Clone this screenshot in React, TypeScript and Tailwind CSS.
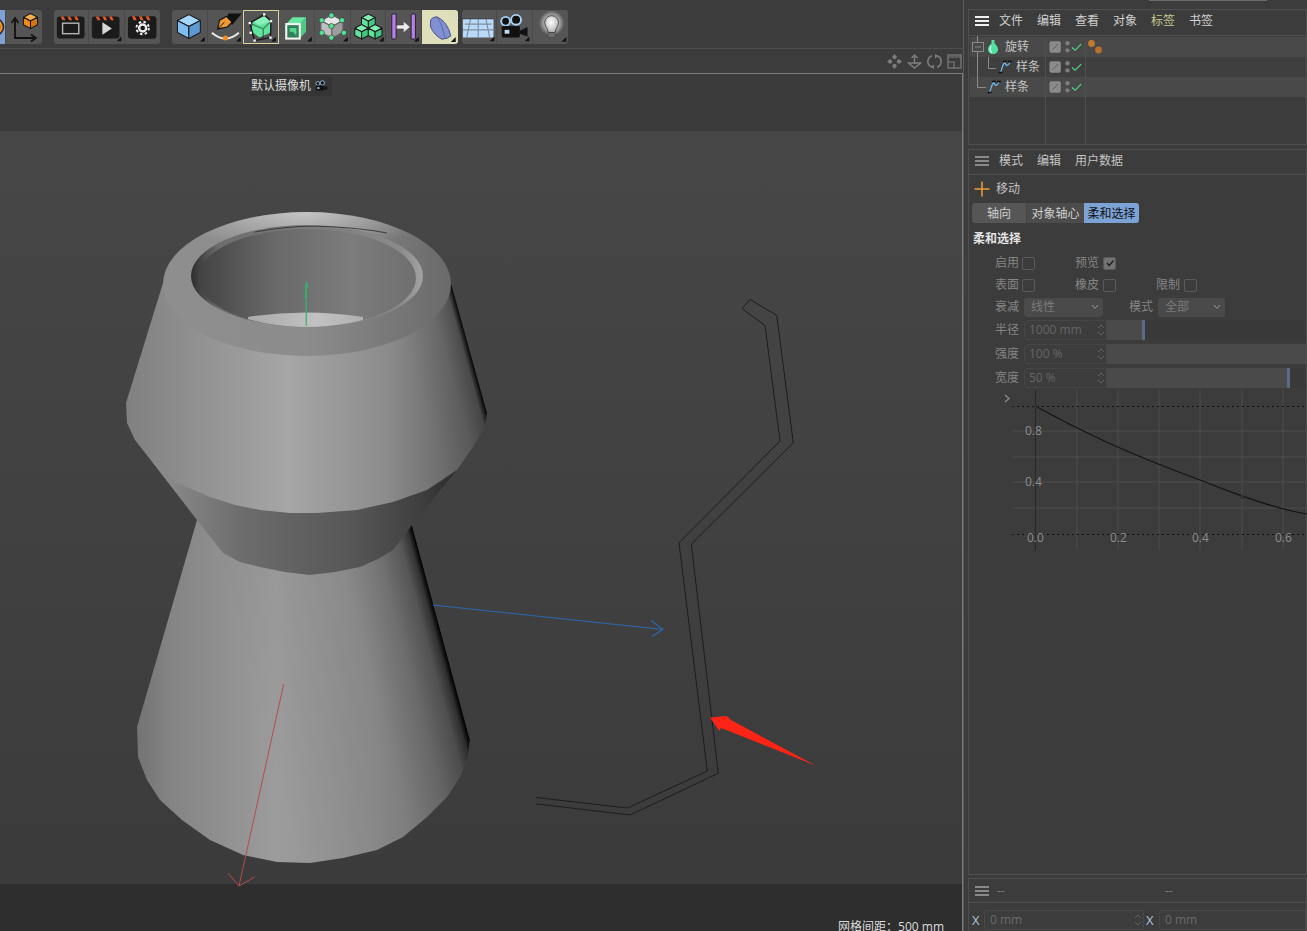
import React from "react";

const FONT = "font-['Open_Sans','Noto_Sans_CJK_SC',sans-serif]";

function Hex({ cx, cy, r, top, left, right, stroke = "#1c1c1c" }: { cx: number; cy: number; r: number; top: string; left: string; right: string; stroke?: string }) {
  const w = r * 0.95;
  const h = r * 0.5;
  return (
    <g stroke={stroke} strokeWidth={1.1} strokeLinejoin="round">
      <polygon points={`${cx},${cy - r} ${cx + w},${cy - h} ${cx},${cy} ${cx - w},${cy - h}`} fill={top} />
      <polygon points={`${cx - w},${cy - h} ${cx},${cy} ${cx},${cy + r} ${cx - w},${cy + h}`} fill={left} />
      <polygon points={`${cx + w},${cy - h} ${cx},${cy} ${cx},${cy + r} ${cx + w},${cy + h}`} fill={right} />
    </g>
  );
}

function Cell({ w = "w-[35.75px]", tri = true, cls = "bg-[#555555]", children }: { w?: string; tri?: boolean; cls?: string; children?: React.ReactNode }) {
  return (
    <div className={`${w} h-[34px] shrink-0 border-r border-[#4a4a4a] last:border-r-0 ${cls}`}>
      <svg viewBox="0 0 36 34" className="block h-full w-full">
        {children}
        {tri && <polygon points="34,27 34,32 29,32" fill="#111" />}
      </svg>
    </div>
  );
}

function Clapper({ children }: { children: React.ReactNode }) {
  return (
    <>
      <rect x="3" y="6" width="29" height="23" rx="3" fill="#1b1b1b" />
      <polygon points="7,6 10,6 12,10 9,10" fill="#e5592b" />
      <polygon points="14,6 17,6 19,10 16,10" fill="#e5592b" />
      <polygon points="21,6 24,6 26,10 23,10" fill="#e5592b" />
      {children}
    </>
  );
}

function CameraGlyph() {
  return (
    <>
      <circle cx="9" cy="11" r="4.6" fill="#111" stroke="#a9d3f5" strokeWidth="2" />
      <circle cx="20" cy="9.5" r="5.2" fill="#111" stroke="#a9d3f5" strokeWidth="2" />
      <rect x="5" y="16" width="19" height="12" rx="1.5" fill="#111" />
      <rect x="8" y="20" width="5" height="4" fill="#b8dcf8" />
      <polygon points="24,21 32,17 32,27 24,24" fill="#111" />
    </>
  );
}

function Toolbar() {
  return (
    <div className="flex h-[49px] shrink-0 items-start border-b border-[#4d4d4d] pt-[10px]">
      <div className="ml-[-30px] flex overflow-hidden rounded-[3px]">
        <Cell w="w-[36px]" tri={false} cls="bg-[#7ea2d4]">
          <circle cx="26" cy="17" r="8.5" fill="#e98f2a" stroke="#222" strokeWidth="1.5" />
          <circle cx="26" cy="17" r="4.5" fill="#7ea2d4" stroke="#222" strokeWidth="1.2" />
        </Cell>
        <Cell w="w-[36px]" tri={false}>
          <path d="M9 10V28H28" fill="none" stroke="#111" strokeWidth="1.8" />
          <polyline points="5.5,13 9,8 12.5,13" fill="none" stroke="#111" strokeWidth="1.6" />
          <polyline points="25,24.5 30,28 25,31.5" fill="none" stroke="#111" strokeWidth="1.6" />
          <Hex cx={24.5} cy={11} r={7.5} top="#f9ae4d" left="#f08c1c" right="#d97510" />
        </Cell>
      </div>
      <div className="ml-[12px] flex overflow-hidden rounded-[3px]">
        <Cell w="w-[35.33px]" tri={false}>
          <Clapper>
            <rect x="9" y="13" width="17" height="11" fill="none" stroke="#b5b5b5" strokeWidth="1.5" />
          </Clapper>
        </Cell>
        <Cell w="w-[35.33px]">
          <Clapper>
            <polygon points="14,12 14,25 24,18.5" fill="#d8d8d8" />
          </Clapper>
        </Cell>
        <Cell w="w-[35.33px]" tri={false}>
          <Clapper>
            <circle cx="18" cy="18" r="6.3" fill="none" stroke="#eee" strokeWidth="2" strokeDasharray="2.6 2.35" />
            <circle cx="18" cy="18" r="3.6" fill="none" stroke="#eee" strokeWidth="2.4" />
          </Clapper>
        </Cell>
      </div>
      <div className="ml-[12px] flex overflow-hidden rounded-[3px]">
        <Cell>
          <Hex cx={17.5} cy={16.5} r={12.5} top="#a6d6fb" left="#7dbdf2" right="#5b9bd2" />
        </Cell>
        <Cell>
          <polygon points="21,3 35,3 25,15 19,9" fill="#111" />
          <polygon points="10,19 12,10 19,6 25,12 20,17" fill="#ef9a38" stroke="#111" strokeWidth="1.2" />
          <path d="M10 19L17 12" stroke="#111" strokeWidth="1" />
          <path d="M4 23Q18 35 32 23" fill="none" stroke="#e8e8e8" strokeWidth="2" />
          <circle cx="18" cy="28.5" r="2.6" fill="#f28c1e" />
        </Cell>
        <Cell cls="bg-[#555555] outline outline-1 -outline-offset-1 outline-[#d9d49a]">
          <polygon points="10,11 22,6 29,11 28,23 17,28 9,22" fill="#5fe59c" />
          <polygon points="10,11 22,6 29,11 17,15" fill="#8cf0bb" />
          <g fill="none" stroke="#1d1d1d" strokeWidth="1.5">
            <polygon points="7,13 22,4 29,11 28.5,28 12,31" />
            <path d="M7 13L12 31M7 13L21 19L29 11M21 19V29" opacity="0.45" />
          </g>
          {[[7, 13], [22, 4], [29, 11], [28.5, 28], [12, 31], [8, 23]].map(([x, y]) => (
            <rect key={`${x}-${y}`} x={x - 1.2} y={y - 1.2} width="2.4" height="2.4" fill="#fff" />
          ))}
        </Cell>
        <Cell>
          <polygon points="7.5,14 14,7 28,7 21.5,14" fill="#68e9a2" />
          <polygon points="21.5,14 28,7 28,22 21.5,29" fill="#4fc984" />
          <rect x="7.5" y="14" width="14" height="15" fill="#2f7f59" stroke="#f3f3f3" strokeWidth="2.2" />
          <polygon points="11,18 18,18 18,26 14.5,22 11,22" fill="#57d690" />
        </Cell>
        <Cell>
          <Hex cx={17.5} cy={16.5} r={12} top="#e6e6e6" left="#bfbfbf" right="#9d9d9d" stroke="#666" />
          {[[17, 5], [28, 10], [30, 23], [17, 28], [7, 23], [7, 10], [17, 16]].map(([x, y]) => (
            <circle key={`${x}-${y}`} cx={x} cy={y} r="2.7" fill="#53e596" stroke="#2a2a2a" strokeWidth="0.6" />
          ))}
        </Cell>
        <Cell>
          <Hex cx={18} cy={11} r={7.5} top="#7ff0b1" left="#5de39a" right="#42c880" />
          <Hex cx={11} cy={22} r={7.5} top="#7ff0b1" left="#5de39a" right="#42c880" />
          <Hex cx={25} cy={22} r={7.5} top="#7ff0b1" left="#5de39a" right="#42c880" />
        </Cell>
        <Cell>
          <rect x="6" y="3.5" width="4.5" height="26" rx="1" fill="#b57ee9" stroke="#222" />
          <rect x="26" y="3.5" width="4.5" height="26" rx="1" fill="#b57ee9" stroke="#222" />
          <polygon points="11,15 18,15 18,11 25,17 18,23 18,19 11,19" fill="#ececec" stroke="#333" strokeWidth="0.5" />
        </Cell>
        <Cell cls="bg-[#e0dfbb]">
          <path d="M8.700 10Q10 7 15 6.700Q26 12 29 26Q26 29 20 29.300Q12 25 8.700 17Z" fill="#7f90d3" stroke="#4b5080" strokeWidth="1" />
          <path d="M15 6.700Q21 15 23 29" fill="none" stroke="#5f6aa5" strokeWidth="1" />
        </Cell>
      </div>
      <div className="ml-[4px] flex overflow-hidden rounded-[3px]">
        <Cell w="w-[35.33px]">
          <rect x="1" y="8" width="32" height="20" fill="#b9daf9" />
          <path d="M0 8H34M3 14H31M1 20H33M9 8L5 28M17 8V28M25 8L29 28" fill="none" stroke="#7f8ea0" strokeWidth="1.2" />
          <path d="M0 8H34" stroke="#444" strokeWidth="1.6" />
        </Cell>
        <Cell w="w-[35.33px]">
          <CameraGlyph />
        </Cell>
        <Cell w="w-[35.33px]">
          <defs>
            <radialGradient id="glow" cx="0.5" cy="0.5" r="0.5">
              <stop offset="0.55" stopColor="#fff" stopOpacity="0.55" />
              <stop offset="1" stopColor="#fff" stopOpacity="0" />
            </radialGradient>
            <radialGradient id="bulb" cx="0.45" cy="0.4" r="0.6">
              <stop offset="0" stopColor="#fff" />
              <stop offset="1" stopColor="#b5b5b5" />
            </radialGradient>
          </defs>
          <circle cx="19" cy="13" r="13" fill="url(#glow)" />
          <path d="M12 12.5a7 7 0 1 1 14 0c0 4-3 5-3.5 10h-7c-.5-5-3.5-6-3.5-10Z" fill="url(#bulb)" stroke="#333" strokeWidth="0.8" />
          <rect x="15.5" y="23" width="7" height="5" rx="1" fill="#8c8c8c" stroke="#333" strokeWidth="0.6" />
          <path d="M16 25H22M16 27H22" stroke="#333" strokeWidth="0.7" />
        </Cell>
      </div>
    </div>
  );
}

function ViewIcons() {
  return (
    <div className="flex h-[24px] shrink-0 items-center justify-end gap-[5px] pr-[1px]">
      <svg viewBox="0 0 15 15" className="h-[15px] w-[15px]" fill="#7d7d7d">
        <polygon points="7.5,0 10,3 8.5,5 6.5,5 5,3" />
        <polygon points="7.5,15 10,12 8.5,10 6.5,10 5,12" />
        <polygon points="0,7.5 3,5 5,6.5 5,8.5 3,10" />
        <polygon points="15,7.5 12,5 10,6.5 10,8.5 12,10" />
      </svg>
      <svg viewBox="0 0 15 15" className="h-[15px] w-[15px]" fill="none" stroke="#7d7d7d" strokeWidth="1.4">
        <path d="M7.5 1V10M4.5 4L7.5 1L10.5 4M1.5 9H13.500L7.500 14Z" />
      </svg>
      <svg viewBox="0 0 15 15" className="h-[15px] w-[15px]" fill="none" stroke="#7d7d7d" strokeWidth="1.6">
        <path d="M5 1.800A6 6 0 0 0 4.500 13M10 13.200A6 6 0 0 0 10.500 2" />
        <polygon points="8,0 11.500,2 8,4.500" fill="#7d7d7d" stroke="none" />
        <polygon points="7,15 3.500,13 7,10.500" fill="#7d7d7d" stroke="none" />
      </svg>
      <svg viewBox="0 0 15 15" className="h-[15px] w-[15px]" fill="none" stroke="#7d7d7d" strokeWidth="1.2">
        <rect x="1" y="1" width="13" height="13" />
        <path d="M1 3H14M1 8H7V14" />
      </svg>
    </div>
  );
}

function Model() {
  const ring =
    "163,283 126,403 127,423 135,440 153,463 177,483 210,497 235,505 260,510 290,513 317,513 357,510 393,502 427,490 457,470 473,447 485,427 487,413 451,283";
  const neck = "153,463 197,520 223,553 240,562 260,567 285,572 310,575 335,572 360,567 378,559 393,550 412,525 457,470";
  const low =
    "197,520 137,727 138,757 147,780 160,800 182,820 210,840 243,855 277,862 310,863 343,858 377,850 403,837 427,817 447,797 460,777 468,757 470,740 412,525";
  return (
    <svg viewBox="0 74 963 857" className="pointer-events-none absolute left-0 top-0 h-[857px] w-[963px]">
      <defs>
        <linearGradient id="lowG" gradientUnits="userSpaceOnUse" x1="137" y1="0" x2="470" y2="0">
          <stop offset="0" stopColor="#737373" />
          <stop offset="0.1" stopColor="#848484" />
          <stop offset="0.42" stopColor="#9c9c9c" />
          <stop offset="0.7" stopColor="#8e8e8e" />
          <stop offset="1" stopColor="#727272" />
        </linearGradient>
        <linearGradient id="lowS" gradientUnits="userSpaceOnUse" x1="248" y1="684" x2="441" y2="632">
          <stop offset="0" stopColor="#000" stopOpacity="0" />
          <stop offset="0.6" stopColor="#000" stopOpacity="0.05" />
          <stop offset="0.8" stopColor="#000" stopOpacity="0.18" />
          <stop offset="0.92" stopColor="#000" stopOpacity="0.35" />
          <stop offset="0.97" stopColor="#000" stopOpacity="0.6" />
          <stop offset="0.99" stopColor="#000" stopOpacity="0.9" />
          <stop offset="1" stopColor="#000" stopOpacity="0.98" />
        </linearGradient>
        <linearGradient id="neckG" gradientUnits="userSpaceOnUse" x1="153" y1="0" x2="457" y2="0">
          <stop offset="0" stopColor="#8e8e8e" />
          <stop offset="0.3" stopColor="#6c6c6c" />
          <stop offset="0.65" stopColor="#575757" />
          <stop offset="0.88" stopColor="#3f3f3f" />
          <stop offset="1" stopColor="#2c2c2c" />
        </linearGradient>
        <linearGradient id="ringG" gradientUnits="userSpaceOnUse" x1="126" y1="0" x2="487" y2="0">
          <stop offset="0" stopColor="#808080" />
          <stop offset="0.45" stopColor="#a6a6a6" />
          <stop offset="0.72" stopColor="#8c8c8c" />
          <stop offset="0.92" stopColor="#666" />
          <stop offset="1" stopColor="#5a5a5a" />
        </linearGradient>
        <linearGradient id="ringS" gradientUnits="userSpaceOnUse" x1="411" y1="364" x2="469" y2="348">
          <stop offset="0" stopColor="#000" stopOpacity="0" />
          <stop offset="0.6" stopColor="#000" stopOpacity="0.08" />
          <stop offset="0.9" stopColor="#000" stopOpacity="0.25" />
          <stop offset="0.95" stopColor="#000" stopOpacity="0.6" />
          <stop offset="1" stopColor="#000" stopOpacity="0.95" />
        </linearGradient>
        <linearGradient id="lipG" gradientUnits="userSpaceOnUse" x1="163" y1="0" x2="451" y2="0">
          <stop offset="0" stopColor="#8e8e8e" />
          <stop offset="0.5" stopColor="#8c8c8c" />
          <stop offset="1" stopColor="#6a6a6a" />
        </linearGradient>
        <radialGradient id="lipTop" gradientUnits="userSpaceOnUse" cx="0" cy="0" r="1" gradientTransform="translate(305 212) scale(140 36)">
          <stop offset="0" stopColor="#fff" stopOpacity="0.5" />
          <stop offset="1" stopColor="#fff" stopOpacity="0" />
        </radialGradient>
        <linearGradient id="holeA" gradientUnits="userSpaceOnUse" x1="191" y1="0" x2="423" y2="0">
          <stop offset="0" stopColor="#2e2e2e" />
          <stop offset="0.12" stopColor="#6d6d6d" />
          <stop offset="0.9" stopColor="#8a8a8a" />
          <stop offset="1" stopColor="#a3a3a3" />
        </linearGradient>
        <linearGradient id="holeB" gradientUnits="userSpaceOnUse" x1="198" y1="0" x2="417" y2="0">
          <stop offset="0" stopColor="#434343" />
          <stop offset="0.35" stopColor="#696969" />
          <stop offset="0.7" stopColor="#7c7c7c" />
          <stop offset="1" stopColor="#6f6f6f" />
        </linearGradient>
        <linearGradient id="floorG" gradientUnits="userSpaceOnUse" x1="248" y1="0" x2="363" y2="0">
          <stop offset="0" stopColor="#aaa" />
          <stop offset="0.6" stopColor="#c2c2c2" />
          <stop offset="1" stopColor="#b0b0b0" />
        </linearGradient>
        <clipPath id="holeClip">
          <ellipse cx="307" cy="278" rx="109" ry="49" />
        </clipPath>
      </defs>

      <polygon points={low} fill="url(#lowG)" />
      <polygon points={low} fill="url(#lowS)" />
      <polygon points={neck} fill="url(#neckG)" />
      <polygon points={ring} fill="url(#ringG)" />
      <polygon points={ring} fill="url(#ringS)" />
      <ellipse cx="307" cy="284" rx="144" ry="72" fill="url(#lipG)" />
      <ellipse cx="307" cy="284" rx="144" ry="72" fill="url(#lipTop)" />
      <ellipse cx="307" cy="276" rx="116" ry="51" fill="url(#holeA)" />
      <ellipse cx="307" cy="278" rx="109" ry="49" fill="url(#holeB)" />
      <path d="M255 232Q315 220 387 233" fill="none" stroke="#2a2a2a" strokeWidth="1.2" opacity="0.75" />
      <g clipPath="url(#holeClip)">
        <path d="M248 317Q305 308 363 317L363 335H248Z" fill="url(#floorG)" />
      </g>
      <path d="M306.300 326V282" stroke="#2fb56c" strokeWidth="1.2" />
      <path d="M305 298L306.500 282L308 287" fill="none" stroke="#2fb56c" strokeWidth="1.2" />

      <path d="M283.700 684L239 886M228 873L239 886L254.500 877" fill="none" stroke="#b94b4b" strokeWidth="1" />
      <path d="M433 605L663 629.500M651 620.500L663 629.500L652 636.500" fill="none" stroke="#2d68b0" strokeWidth="1.1" />

      <g fill="none" stroke="#1d1d1d" strokeWidth="1">
        <path d="M536 797.500L627.700 808L707.300 771L679 542.800L780 441L765 325.500L742 308.500L750 299.500L776.700 315.300L793.300 442.800L691.300 544.200L718.300 773.300L630 815L535.700 803.800" />
      </g>
      <polygon points="710,717.500 726.700,716 731,720 815.500,765.500 721,728 719.300,731" fill="#fb2416" />
    </svg>
  );
}

function Viewport() {
  return (
    <div className="relative flex min-h-0 flex-1 flex-col overflow-hidden border-r border-t border-[#7b7b7b]">
      <div className="flex h-[57px] shrink-0 items-start bg-[#3b3b3b] pl-[250px] pt-[2px]">
        <div className="flex h-[20px] items-center gap-[2px] rounded-[2px] bg-[#353535] pl-[1px] pr-[2px] text-[12px] leading-[20px] text-[#dedede]">
          <span>默认摄像机</span>
          <svg viewBox="0 0 36 34" className="h-[14px] w-[17px]">
            <CameraGlyph />
          </svg>
        </div>
      </div>
      <div className="min-h-0 flex-1 bg-gradient-to-b from-[#474747] to-[#3b3b3b]" />
      <div className="flex h-[47px] shrink-0 justify-end overflow-hidden bg-[#2e2e2e] pr-[18px] pt-[35px] text-[12px] leading-[16px] text-[#dcdcdc]">
        网格间距：500 mm
      </div>
      <Model />
    </div>
  );
}

function Burger({ color }: { color: string }) {
  return (
    <div className="flex w-[14px] flex-col gap-[2px]">
      <div className={`h-[2px] ${color}`} />
      <div className={`h-[2px] ${color}`} />
      <div className={`h-[2px] ${color}`} />
    </div>
  );
}

function SplineIcon() {
  return (
    <svg viewBox="0 0 14 14" className="h-[14px] w-[14px]">
      <path d="M2.500 12.500C4 9 5 3 7 2.500C8 6 9 7 12 2.500" fill="none" stroke="#6db7ee" strokeWidth="1.300" />
      <path d="M0.500 12.500H4.500M5 1.500H9M10 1.500H14" stroke="#111" strokeWidth="1.500" />
    </svg>
  );
}

function Flags({ tag = false, empty = false }: { tag?: boolean; empty?: boolean }) {
  return (
    <>
      <div className="flex w-[40px] shrink-0 items-center border-l border-[#4f4f4f] pl-[3px]">
        {!empty && (
          <svg viewBox="0 0 38 14" className="h-[14px] w-[38px]">
            <rect x="0.500" y="1" width="12" height="12" rx="2" fill="#8b8b8b" />
            <path d="M3.500 10L9.500 4" stroke="#5a5a5a" strokeWidth="1" />
            <circle cx="19.500" cy="3" r="2.300" fill="#7d7d7d" />
            <circle cx="19.500" cy="10.500" r="2.300" fill="#7d7d7d" />
            <path d="M24.500 7.500L27.500 10.500L34 4" fill="none" stroke="#4ede85" strokeWidth="1.200" />
          </svg>
        )}
      </div>
      <div className="flex min-w-0 flex-1 items-center border-l border-[#4f4f4f] pl-[1px]">
        {tag && (
          <svg viewBox="0 0 16 16" className="h-[16px] w-[16px]">
            <circle cx="4.500" cy="4.500" r="3.400" fill="#c27a2e" />
            <circle cx="11.500" cy="11" r="3.400" fill="#b8702a" />
          </svg>
        )}
      </div>
    </>
  );
}

function TreePanel() {
  const menu = ["文件", "编辑", "查看", "对象", "标签", "书签"];
  return (
    <div className="h-[136px] shrink-0 border border-[#4f4f4f]">
      <div className="flex h-[26px] items-center gap-[10px] border-b border-[#4f4f4f] pb-[3px] pl-[6px]">
        <Burger color="bg-[#f0f0f0]" />
        <div className="flex gap-[14px]">
          {menu.map((m) => (
            <span key={m} className={m === "标签" ? "text-[#c6c98e]" : "text-[#d0d0d0]"}>
              {m}
            </span>
          ))}
        </div>
      </div>
      <div className="relative flex h-[108px] flex-col pl-[1px] pt-[1px] text-[#c4c4c4]">
        <div className="flex h-[20px] shrink-0 bg-[#494949]">
          <div className="flex w-[75px] shrink-0 items-center pl-[18px]">
            <svg viewBox="0 0 10 14" className="h-[14px] w-[10px]">
              <path d="M3.500 0H6.500V3.500C9 5.500 10 7.500 10 9.500C10 12 8 14 5 14S0 12 0 9.500C0 7.500 1 5.500 3.500 3.500Z" fill="#52e0a0" />
              <path d="M3 6C2 8 2 11 4 12.500" fill="none" stroke="#d8fff0" strokeWidth="1.200" />
            </svg>
            <span className="ml-[7px]">旋转</span>
          </div>
          <Flags tag />
        </div>
        <div className="flex h-[20px] shrink-0 bg-[#3f3f3f]">
          <div className="flex w-[75px] shrink-0 items-center pl-[28px]">
            <SplineIcon />
            <span className="ml-[4px]">样条</span>
          </div>
          <Flags />
        </div>
        <div className="flex h-[20px] shrink-0 bg-[#494949]">
          <div className="flex w-[75px] shrink-0 items-center pl-[17px]">
            <SplineIcon />
            <span className="ml-[4px]">样条</span>
          </div>
          <Flags />
        </div>
        <div className="flex min-h-0 flex-1">
          <div className="w-[75px] shrink-0" />
          <Flags empty />
        </div>
        <svg viewBox="0 0 40 60" className="pointer-events-none absolute left-0 top-0 h-[60px] w-[40px]" fill="none" stroke="#8a8a8a" strokeWidth="1">
          <path d="M8.500 0V6M8.500 16V51.500H17M19.500 21V32.500H27" />
          <rect x="3.500" y="6.500" width="11" height="9" />
          <path d="M6 11H12" />
        </svg>
      </div>
    </div>
  );
}

function Check({ checked = false }: { checked?: boolean }) {
  return (
    <div className={`flex h-[13px] w-[13px] items-center justify-center rounded-[2px] border border-[#5a5a5a] ${checked ? "bg-[#727272]" : ""}`}>
      {checked && (
        <svg viewBox="0 0 10 10" className="h-[10px] w-[10px]">
          <path d="M2 5L4.200 7.500L8.500 2.500" fill="none" stroke="#1d1d1d" strokeWidth="1.300" />
        </svg>
      )}
    </div>
  );
}

function Spin() {
  return (
    <svg viewBox="0 0 8 14" className="h-[14px] w-[8px]" fill="none" stroke="#626262" strokeWidth="1">
      <path d="M1 5L4 2L7 5M1 9L4 12L7 9" />
    </svg>
  );
}

function Select({ w, value }: { w: string; value: string }) {
  return (
    <div className={`flex h-[19px] ${w} items-center justify-between rounded-[3px] bg-[#4a4a4a] pl-[7px] pr-[4px] text-[#7b7b7b]`}>
      <span>{value}</span>
      <svg viewBox="0 0 8 6" className="h-[6px] w-[8px]" fill="none" stroke="#999" strokeWidth="1">
        <path d="M1 1L4 4.500L7 1" />
      </svg>
    </div>
  );
}

function SliderRow({ label, value, fill, mark }: { label: string; value: string; fill: string; mark: boolean }) {
  return (
    <div className="flex h-[24px] items-center pl-[26px]">
      <span className="w-[24px] shrink-0 text-[#858585]">{label}</span>
      <div className="ml-[5px] flex h-[20px] w-[83px] shrink-0 items-center justify-between rounded-l-[3px] border border-[#464646] bg-[#3d3d3d] pl-[4px] pr-[1px] text-[#656565]">
        <span>{value}</span>
        <Spin />
      </div>
      <div className="flex h-[20px] min-w-0 flex-1 bg-[#393939]">
        <div className={`h-full ${fill} bg-[#4a4a4a]`} />
        {mark && <div className="h-full w-[3px] bg-[#5b6b88]" />}
      </div>
    </div>
  );
}

function Graph() {
  const labels: [string, number, number][] = [
    ["0.8", 1025, 435],
    ["0.4", 1025, 486],
    ["0.0", 1027, 542],
    ["0.2", 1110, 542],
    ["0.4", 1192, 542],
    ["0.6", 1275, 542],
  ];
  return (
    <svg viewBox="969 390 338 165" className="block h-[165px] w-[338px]">
      <g stroke="#4c4c4c" strokeWidth="1">
        {[1077, 1118, 1159, 1200, 1242, 1283].map((x) => (
          <line key={x} x1={x} y1="390" x2={x} y2="550" />
        ))}
        {[431, 457, 482, 508].map((y) => (
          <line key={y} x1="1012" y1={y} x2="1307" y2={y} />
        ))}
      </g>
      <path d="M1035.500 390V551" stroke="#262626" strokeWidth="1" />
      <path d="M1012 406.500H1307M1012 534.500H1307" stroke="#111" strokeWidth="1" strokeDasharray="2 3" />
      <path d="M1036 406.500C1080 431 1125 452 1200 480C1225 490 1270 508 1307 514" fill="none" stroke="#141414" strokeWidth="1.200" />
      <circle cx="1036" cy="406.500" r="2" fill="#333" />
      <circle cx="1242" cy="497" r="2" fill="#333" />
      <path d="M1005 395L1009 398.500L1005 402" fill="none" stroke="#8a8a8a" strokeWidth="1.300" />
      {labels.map(([t, x, y]) => (
        <text key={`${t}-${x}`} x={x} y={y} fontSize="12" fill="#8e8e8e">
          {t}
        </text>
      ))}
    </svg>
  );
}

function AttrPanel() {
  const disabled = "text-[#858585]";
  return (
    <div className="flex h-[726px] shrink-0 flex-col border border-[#4f4f4f]">
      <div className="flex h-[25px] shrink-0 items-center gap-[10px] border-b border-[#4f4f4f] pb-[2px] pl-[6px] text-[#c4c4c4]">
        <Burger color="bg-[#8a8a8a]" />
        <div className="flex gap-[14px]">
          <span>模式</span>
          <span>编辑</span>
          <span>用户数据</span>
        </div>
      </div>
      <div className="flex h-[28px] shrink-0 items-center pl-[5px] text-[#c4c4c4]">
        <svg viewBox="0 0 16 16" className="h-[16px] w-[16px]" stroke="#eb9a37" strokeWidth="1.600">
          <path d="M8 0.500V15.500M0.500 8H15.500" />
        </svg>
        <span className="ml-[6px]">移动</span>
      </div>
      <div className="ml-[3px] flex h-[20px] w-[167px] shrink-0 overflow-hidden rounded-[3px] text-center leading-[21px]">
        <div className="w-[54px] bg-[#565656] text-[#cfcfcf]">轴向</div>
        <div className="w-[58px] border-l border-[#444] bg-[#4c4c4c] text-[#cfcfcf]">对象轴心</div>
        <div className="w-[55px] bg-[#7da2d6] text-[#111]">柔和选择</div>
      </div>
      <div className="mt-[8px] h-[16px] shrink-0 pl-[4px] font-bold leading-[16px] text-[#e4e4e4]">柔和选择</div>
      <div className="mt-[5px] flex shrink-0 flex-col">
        <div className="flex h-[22px] items-center pl-[26px]">
          <span className={`w-[24px] ${disabled}`}>启用</span>
          <div className="ml-[3px]"><Check /></div>
          <span className={`ml-[40px] w-[24px] ${disabled}`}>预览</span>
          <div className="ml-[4px]"><Check checked /></div>
        </div>
        <div className="flex h-[22px] items-center pl-[26px]">
          <span className={`w-[24px] ${disabled}`}>表面</span>
          <div className="ml-[3px]"><Check /></div>
          <span className={`ml-[40px] w-[24px] ${disabled}`}>橡皮</span>
          <div className="ml-[4px]"><Check /></div>
          <span className={`ml-[40px] w-[24px] ${disabled}`}>限制</span>
          <div className="ml-[4px]"><Check /></div>
        </div>
        <div className="flex h-[22px] items-center pl-[26px]">
          <span className={`w-[24px] ${disabled}`}>衰减</span>
          <div className="ml-[5px]"><Select w="w-[79px]" value="线性" /></div>
          <span className={`ml-[26px] w-[24px] ${disabled}`}>模式</span>
          <div className="ml-[5px]"><Select w="w-[67px]" value="全部" /></div>
        </div>
        <SliderRow label="半径" value="1000 mm" fill="w-[35px]" mark />
        <SliderRow label="强度" value="100 %" fill="w-full" mark={false} />
        <SliderRow label="宽度" value="50 %" fill="w-[180px]" mark />
      </div>
      <div>
        <Graph />
      </div>
    </div>
  );
}

function CoordPanel() {
  return (
    <div className="min-h-0 flex-1 border-x border-t border-[#4f4f4f]">
      <div className="flex h-[24px] items-center border-b border-[#4f4f4f] pl-[6px] text-[#7a7a7a]">
        <Burger color="bg-[#8a8a8a]" />
        <span className="ml-[8px] w-[168px]">--</span>
        <span>--</span>
      </div>
      <div className="flex h-[28px] items-center pl-[3px] pt-[6px] text-[#6a6a6a]">
        <span className="w-[12px] text-[13px] text-[#a9c4dd]">X</span>
        <div className="flex h-[20px] w-[160px] items-center justify-between rounded-l-[3px] border border-[#484848] bg-[#3d3d3d] pl-[5px] pr-[1px]">
          <span>0 mm</span>
          <Spin />
        </div>
        <span className="ml-[2px] w-[13px] text-[13px] text-[#a9c4dd]">X</span>
        <div className="flex h-[20px] min-w-0 flex-1 items-center rounded-l-[3px] border border-[#484848] bg-[#3d3d3d] pl-[5px]">
          <span>0 mm</span>
        </div>
      </div>
    </div>
  );
}

export default function App() {
  return (
    <div className={`flex h-[931px] w-[1307px] overflow-hidden bg-[#3c3c3c] text-[12px] leading-[16px] ${FONT}`}>
      <div className="flex w-[964px] shrink-0 flex-col border-r border-[#5a5a5a]">
        <Toolbar />
        <ViewIcons />
        <Viewport />
      </div>
      <div className="flex min-w-0 flex-1 flex-col pl-[4px]">
        <div className="mb-[8px] ml-[181px] h-[1px] w-[118px] shrink-0 bg-[#6a6a6a]" />
        <TreePanel />
        <div className="h-[4px] shrink-0" />
        <AttrPanel />
        <div className="h-[3px] shrink-0" />
        <CoordPanel />
      </div>
    </div>
  );
}
